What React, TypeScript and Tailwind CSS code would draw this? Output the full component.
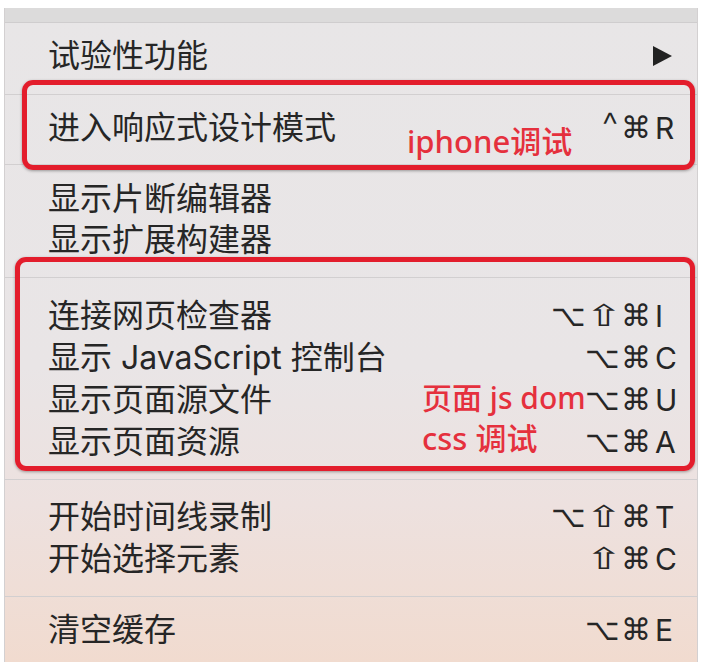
import React from 'react';

type Item =
  | { kind: 'row'; label: string; mods?: string[]; keyChar?: string; sub?: boolean; h: string }
  | { kind: 'sep'; cls: string };

const ITEMS: Item[] = [
  { kind: 'row', label: '试验性功能', sub: true, h: 'h-[66px]' },
  { kind: 'sep', cls: 'mt-[5px] mb-[4px]' },
  { kind: 'row', label: '进入响应式设计模式', mods: ['^', '⌘'], keyChar: 'R', h: 'h-[58px]' },
  { kind: 'sep', cls: 'mt-[7px] mb-[13px]' },
  { kind: 'row', label: '显示片断编辑器', h: 'h-[41px]' },
  { kind: 'row', label: '显示扩展构建器', h: 'h-[41px]' },
  { kind: 'sep', cls: 'mt-[17px] mb-[17px]' },
  { kind: 'row', label: '连接网页检查器', mods: ['⌥', '⇧', '⌘'], keyChar: 'I', h: 'h-[42px]' },
  { kind: 'row', label: '显示 JavaScript 控制台', mods: ['⌥', '⌘'], keyChar: 'C', h: 'h-[42px]' },
  { kind: 'row', label: '显示页面源文件', mods: ['⌥', '⌘'], keyChar: 'U', h: 'h-[42px]' },
  { kind: 'row', label: '显示页面资源', mods: ['⌥', '⌘'], keyChar: 'A', h: 'h-[42px]' },
  { kind: 'sep', cls: 'mt-[16px] mb-[16px]' },
  { kind: 'row', label: '开始时间线录制', mods: ['⌥', '⇧', '⌘'], keyChar: 'T', h: 'h-[42px]' },
  { kind: 'row', label: '开始选择元素', mods: ['⇧', '⌘'], keyChar: 'C', h: 'h-[42px]' },
  { kind: 'sep', cls: 'mt-[16px] mb-[12px]' },
  { kind: 'row', label: '清空缓存', mods: ['⌥', '⌘'], keyChar: 'E', h: 'h-[42px]' },
];

function Mod({ m }: { m: string }) {
  if (m === '^') {
    return <span className="mr-[2px] -translate-y-[3px] font-['Inter',sans-serif] text-[36px]">^</span>;
  }
  if (m === '⇧') {
    return <span className="mx-[4px] inline-block scale-x-[1.5]">⇧</span>;
  }
  return <span>{m}</span>;
}

function Shortcut({ mods, keyChar }: { mods: string[]; keyChar: string }) {
  return (
    <div className="flex items-center">
      <div className="flex items-center gap-[1px] font-['DejaVu_Sans',sans-serif] text-[30px] font-light leading-none">
        {mods.map((m, i) => (
          <Mod key={i} m={m} />
        ))}
      </div>
      <span className="ml-[4px] w-[24px] text-[30px] leading-none">{keyChar}</span>
    </div>
  );
}

export default function App() {
  return (
    <div className="relative h-[662px] w-[704px] overflow-hidden bg-white font-['Inter','Noto_Sans_CJK_SC',sans-serif] text-[#262626]">
      <div className="flex h-full pl-[4px] pr-[6px] pt-[8px]">
        <div className="flex flex-1 flex-col border-x border-[#d3d0d1] bg-[linear-gradient(to_bottom,#e8e6e7_0%,#e9e5e6_55%,#ede1df_76%,#f1dbcf_100%)]">
          {/* top edge of the menu, cut off */}
          <div className="h-[15px] shrink-0 border-b border-[#cfcdce] bg-[#dcdbdb]" />

          {ITEMS.map((it, idx) =>
            it.kind === 'sep' ? (
              <div key={idx} className={`h-px shrink-0 bg-[#d2cfd0] ${it.cls}`} />
            ) : (
              <div key={idx} className={`flex shrink-0 items-center justify-between pl-[43px] pr-[18px] ${it.h}`}>
                <span className="text-[32px] leading-none">{it.label}</span>
                {it.sub && (
                  <svg width="22" height="22" viewBox="0 0 22 22" className="mr-[6px]">
                    <path d="M2 1 L21 11 L2 21 Z" fill="#222" />
                  </svg>
                )}
                {it.mods && it.keyChar && <Shortcut mods={it.mods} keyChar={it.keyChar} />}
              </div>
            ),
          )}
        </div>
      </div>

      {/* red annotations drawn over the menu */}
      <div className="absolute left-[22px] top-[80px] h-[90px] w-[673px] rounded-[11px] border-[5px] border-[#e31d2c] shadow-[0_1px_3px_rgba(0,0,0,0.35)]" />
      <div className="absolute left-[15px] top-[257px] h-[214px] w-[680px] rounded-[11px] border-[5px] border-[#e31d2c] shadow-[0_1px_3px_rgba(0,0,0,0.35)]" />

      <div className="absolute left-[407px] top-[126px] font-['Noto_Sans','Noto_Sans_CJK_SC',sans-serif] text-[31px] font-medium leading-none text-[#e5303d]">
        iphone调试
      </div>
      <div className="absolute left-[422px] top-[383px] font-['Noto_Sans','Noto_Sans_CJK_SC',sans-serif] text-[30px] font-medium leading-none text-[#e5303d]">
        页面 js dom
      </div>
      <div className="absolute left-[422px] top-[423px] font-['Noto_Sans','Noto_Sans_CJK_SC',sans-serif] text-[31px] font-medium leading-none text-[#e5303d]">
        css 调试
      </div>
    </div>
  );
}
